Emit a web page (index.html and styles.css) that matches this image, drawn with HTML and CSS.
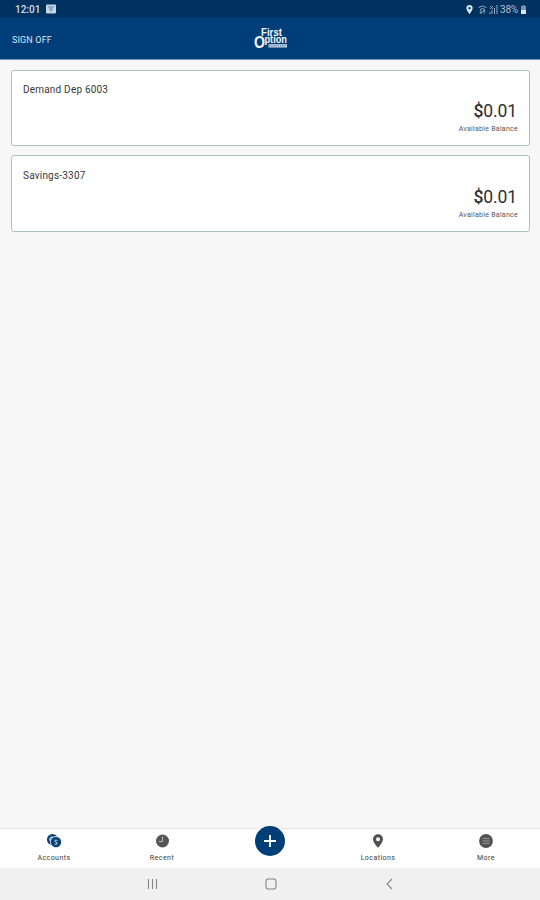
FILE: index.html
```html
<!DOCTYPE html>
<html lang="en">
<head>
    <meta charset="UTF-8">
    <meta name="viewport" content="width=device-width, initial-scale=1.0">
    <title>First Option - Accounts</title>
    <link rel="stylesheet" href="styles.css">
</head>
<body>
    <div class="status-bar">
        <div class="status-left">
            <span class="clock">12:01</span>
            <svg width="10" height="10" viewBox="0 0 10 10">
                <rect width="10" height="9" y="0.5" rx="1" fill="#c4d5e4"/>
                <path d="M2 3h6M3 5h4M5 5v2.5" stroke="#6587a7" fill="none"/>
            </svg>
        </div>
        <div class="status-right">
            <svg class="pin-status" width="7" height="9" viewBox="0 0 14 20">
                <path fill="#d5e2ed" fill-rule="evenodd" d="M7 0a7 7 0 0 0-7 7c0 5 7 13 7 13s7-8 7-13a7 7 0 0 0-7-7zm0 4.5a2.5 2.5 0 1 1 0 5 2.5 2.5 0 0 1 0-5z"/>
            </svg>
            <svg class="wifi" width="9" height="9" viewBox="0 0 9 9" fill="none" stroke="#8faac3">
                <path d="M0.5 2.5q4-3 8 0M2 4.5q2.5-2 5 0M3 5v3.5M6 8.5V5M1.8 7L3 8.5 4.2 7M4.8 6.5L6 5l1.2 1.5"/>
            </svg>
            <svg class="signal" width="9" height="9" viewBox="0 0 9 9">
                <path d="M1 9V7M3 9V5M5.5 9V3M8 9V0M1 1l3 3M4 1L1 4" stroke="#8faac3" fill="none"/>
            </svg>
            <span class="battery-text">38%</span>
            <svg width="5" height="9" viewBox="0 0 5 9">
                <path d="M1.5 0h2v1H5v8H0V1h1.5z" fill="#7894ae"/>
                <path d="M0 5h5v4H0z" fill="#dbe6ef"/>
            </svg>
        </div>
    </div>

    <div class="header">
        <a class="sign-off">SIGN OFF</a>
        <svg class="logo" width="34" height="22" viewBox="0 0 34 22">
            <text class="logo-text" x="7" y="9" font-size="11" textLength="21" lengthAdjust="spacingAndGlyphs">First</text>
            <text class="logo-text" x="0" y="20.5" font-size="16.5" textLength="11" lengthAdjust="spacingAndGlyphs">O</text>
            <text class="logo-text" x="10.5" y="16" font-size="10" textLength="22.5" lengthAdjust="spacingAndGlyphs">ption</text>
            <rect x="14.5" y="17.2" width="18.5" height="3.3" fill="#c8d7e5"/>
            <path d="M15 18.9h17.5" stroke="#54799e" stroke-dasharray="1.5 0.7"/>
        </svg>
    </div>

    <div class="content">
        <div class="account-card">
            <div class="account-name">Demand Dep 6003</div>
            <div class="balance"><span class="currency">$</span>0.01</div>
            <div class="balance-label">Available Balance</div>
        </div>
        <div class="account-card">
            <div class="account-name">Savings-3307</div>
            <div class="balance"><span class="currency">$</span>0.01</div>
            <div class="balance-label">Available Balance</div>
        </div>
    </div>

    <div class="tab-bar">
        <a class="tab">
            <svg width="16" height="14" viewBox="0 0 16 14">
                <circle cx="6.5" cy="5.5" r="5.5" fill="#073e75"/>
                <path d="M3.5 6.5q0-3 3-4" stroke="#d9e4ed" stroke-width="1.1" fill="none"/>
                <circle cx="10" cy="8.1" r="5.6" fill="#073e75" stroke="#fff" stroke-width="0.8"/>
                <path d="M11.5 6.5q-1.8-1-2.6 0t1.1 1.7q1.8.6 1 1.7t-2.5 0" stroke="#d9e4ed" stroke-width="0.9" fill="none"/>
            </svg>
            <span>Accounts</span>
        </a>
        <a class="tab">
            <svg width="14" height="14" viewBox="0 0 14 14">
                <circle cx="7.5" cy="7" r="6.5" fill="#565656"/>
                <path d="M7.5 2.5V7.5H4" stroke="#bdbdbd" fill="none"/>
            </svg>
            <span>Recent</span>
        </a>
        <a class="tab-add">
            <svg width="12" height="12" viewBox="0 0 12 12">
                <path d="M6 0v12M0 6h12" stroke="#fff" stroke-width="1.8"/>
            </svg>
        </a>
        <a class="tab">
            <svg width="14" height="14" viewBox="0 0 14 14">
                <path fill="#505050" fill-rule="evenodd" d="M7 0.3a5 5 0 0 0-5 5c0 3.5 5 8.5 5 8.5s5-5 5-8.5a5 5 0 0 0-5-5zm0 3a2 2 0 1 1 0 4 2 2 0 0 1 0-4z"/>
            </svg>
            <span>Locations</span>
        </a>
        <a class="tab">
            <svg width="14" height="14" viewBox="0 0 14 14">
                <circle cx="7" cy="7" r="6.9" fill="#505050"/>
                <path d="M3.5 4.5h7M3.5 7h7M3.5 9.5h7" stroke="#858585" stroke-width="1.7"/>
            </svg>
            <span>More</span>
        </a>
    </div>

    <div class="nav-bar">
        <svg width="12" height="12" viewBox="0 0 12 12">
            <path d="M1.5 1v10M5.5 1v10M9.5 1v10" stroke="#858585" stroke-width="1.1"/>
        </svg>
        <svg width="12" height="12" viewBox="0 0 12 12">
            <rect x="1" y="1" width="10" height="10" rx="2.5" stroke="#858585" stroke-width="1.1" fill="none"/>
        </svg>
        <svg width="12" height="12" viewBox="0 0 12 12">
            <path d="M9 1L4 6l5 5" stroke="#858585" stroke-width="1.1" fill="none"/>
        </svg>
    </div>
</body>
</html>
```
FILE: styles.css
```css
* {
    box-sizing: border-box;
}

body {
    margin: 0;
    height: 900px;
    font-family: Roboto, Arial, sans-serif;
    background-color: #f7f7f7;
    color: #383838;
    display: flex;
    flex-direction: column;
    overflow: hidden;
}

svg {
    display: block;
    flex-shrink: 0;
}

.status-bar {
    height: 17px;
    flex-shrink: 0;
    padding: 1px 14px 0 15px;
    background-color: #00315f;
    color: #d5dfe8;
    display: flex;
    align-items: center;
    justify-content: space-between;
}

.status-left,
.status-right {
    display: flex;
    align-items: center;
}

.clock {
    width: 31px;
    font-size: 10px;
    font-weight: 500;
}

.wifi {
    margin-left: 5px;
}

.signal {
    margin-left: 2px;
}

.battery-text {
    width: 20px;
    margin: 0 1px 0 2px;
    font-size: 10px;
    letter-spacing: -0.2px;
    color: #acbfd0;
}

.header {
    height: 43px;
    flex-shrink: 0;
    padding: 0 12px;
    background-color: #003e79;
    border-bottom: 1px solid #7895b4;
    display: grid;
    grid-template-columns: 1fr auto 1fr;
    align-items: center;
}

.sign-off {
    padding-top: 3px;
    color: #dce5ed;
    font-size: 9px;
    letter-spacing: 0.15px;
}

.logo {
    margin-left: 1px;
    overflow: visible;
}

.logo-text {
    font-family: "Liberation Sans", Arial, sans-serif;
    font-weight: bold;
    fill: #f0f5fa;
}

.content {
    flex: 1;
    padding: 10px 10px 0 11px;
}

.account-card {
    height: 76px;
    margin-bottom: 9px;
    padding: 12px 11px 0;
    background-color: white;
    border: 1px solid #a9c0c6;
    border-radius: 3px;
}

.account-card + .account-card {
    height: 77px;
    padding-top: 13px;
}

.account-name {
    font-size: 10px;
    line-height: 14px;
    letter-spacing: 0.2px;
}

.balance {
    margin-top: 4px;
    padding-right: 1px;
    text-align: right;
    font-size: 17.5px;
    line-height: 20px;
    letter-spacing: -0.1px;
    color: #303030;
}

.currency {
    font-weight: 500;
}

.balance-label {
    margin-top: 3px;
    text-align: right;
    font-size: 7px;
    line-height: 10px;
    letter-spacing: 0.27px;
    color: #555;
}

.tab-bar {
    height: 40px;
    flex-shrink: 0;
    background-color: white;
    border-top: 1px solid #e5e5e5;
    display: grid;
    grid-template-columns: repeat(5, 108px);
}

.tab {
    padding-top: 5px;
    display: flex;
    flex-direction: column;
    align-items: center;
    gap: 6px;
    font-size: 7px;
    line-height: 9px;
    letter-spacing: 0.45px;
}

.tab-add {
    width: 30px;
    height: 30px;
    margin-top: -3px;
    justify-self: center;
    border-radius: 50%;
    background-color: #003e78;
    display: flex;
    align-items: center;
    justify-content: center;
}

.nav-bar {
    height: 32px;
    flex-shrink: 0;
    padding-left: 147px;
    background-color: #f0f0f0;
    display: flex;
    align-items: center;
    gap: 106px;
}
```
